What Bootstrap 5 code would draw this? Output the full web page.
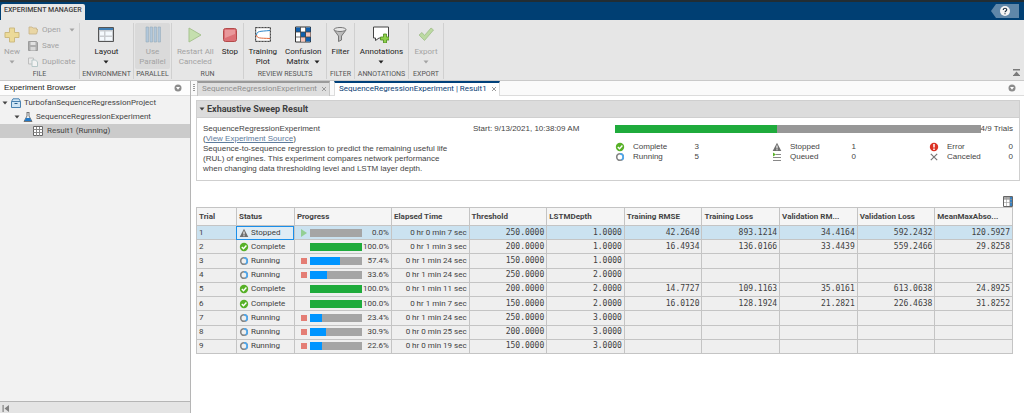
<!DOCTYPE html>
<html lang="en">
<head>
<meta charset="utf-8">
<meta name="viewport" content="width=device-width, initial-scale=1">
<title>Experiment Manager</title>
<link href="https://cdn.jsdelivr.net/npm/bootstrap@5.3.0/dist/css/bootstrap.min.css" rel="stylesheet">
<style>
body{font:8px/10px Roboto,"Liberation Sans",sans-serif;color:#404040;background:#fff}
svg{display:block;flex:none}
button{font:inherit;color:inherit;background:none;border:0;padding:0}
.titlebar{background:#003f73;border-top:2px solid #222d33;height:20px}
.app-tab{background:#e8e8e8;font-size:7px;font-weight:500;line-height:12px;height:16px;padding:0 3px;margin-left:1px;border-radius:2px 2px 0 0;width:84px;white-space:nowrap}
.help{background:#5f87a9;width:28px;height:14px;margin:2px 5px 0 0;clip-path:polygon(0 50%,5px 0,100% 0,100% 100%,5px 100%)}
.ribbon{background:#e6e6e6;border-bottom:1px solid #c9c9c9;height:61px}
.tool-group{border-right:1px solid #d0d0d0;margin-top:3px;height:56px;white-space:nowrap}
.tool-group footer{font-size:7px;color:#555;text-align:center;line-height:10px}
.tools{height:46px}
.tool{display:flex;flex-direction:column;align-items:center;padding-top:3px;height:46px;color:#222}
.tool svg.ico{margin-bottom:4px}
.tool .drop{margin-top:3px}
.tool .two{display:flex;align-items:center;gap:5px}
.tool .two .drop{margin-top:0}
.off{color:#a3a3a3!important}
.off svg{opacity:.5}
.off svg.drop{opacity:1}
.pressed{background:#dadada;border-radius:2px}
.g-file{width:80px}.g-env{width:54px}.g-par{width:38px}.g-run{width:72px}.g-rev{width:83px}.g-fil{width:28px}.g-ann{width:54px}.g-exp{width:35px}
.file-list{padding-top:2px;gap:6px}
.sidebar{width:191px;border-right:1px solid #b5b5b5;background:#f2f2f2}
.side-head{background:#fdfdfd;border-bottom:1px solid #dedede;height:15px;padding:0 8px 0 4px;font-family:"Liberation Sans",sans-serif;color:#222}
.tree li{height:14px;display:flex;align-items:center;gap:3px;color:#444}
.tree .lv1{padding-left:2px}.tree .lv2{padding-left:14px}.tree .lv3{padding-left:33px;gap:4px}
.tree .picked{background:#cbcbcb}
.side-foot{height:12px;background:#e4e4e4;border-top:1px solid #b5b5b5;padding:3px 0 0 2px}
.tabs{background:#fafafa;border-bottom:1px solid #dcdcdc;height:15px;padding:0 8px 0 2px}
.grip{margin-right:2px}
.doc-tab{height:15px;border:1px solid #c4c4c4;border-top:2px solid #9a9a9a;border-bottom:0;background:#dedede;color:#8f8f8f;padding:0 2px 0 4px;white-space:nowrap}
.doc-tab.current{border-color:#dcdcdc;border-top-color:#00407a;background:#fff;color:#0b4075}
.work{padding:4px 4px 0 5px}
.sweep{border:1px solid #cfcfcf}
.sweep summary{background:#dcdcdc;border-bottom:1px solid #cfcfcf;height:17px;display:flex;align-items:center;gap:2px;padding-left:2px;font:bold 9px/10px Roboto,sans-serif}
.sweep-body{display:grid;grid-template-columns:270fr 142fr 398fr;padding:6px;min-height:62px;font-family:"Liberation Sans",sans-serif;color:#444}
.desc{max-width:256px}
.sweep a{color:#5d7b9c}
.progress{border-radius:0;background:#a5a5a5;height:8px}
.progress-bar{background:#0095ff}
.progress-bar.done{background:#1fab3c}
.overall{background:#979797}
.stat{width:84px;gap:8px}
.results{padding:15px 7px 0 0}
.trials{width:100%;table-layout:fixed;height:147px;border-collapse:collapse;border:1px solid #b0b0b0;background:#efefef}
.trials th,.trials td{border:1px solid #c4c4c4;padding:0 2px;white-space:nowrap;overflow:hidden;height:14px}
.trials thead th{background:#f5f5f5;height:18px;font-weight:700;color:#444}
.trials .n{font-family:"DejaVu Sans Mono",monospace;text-align:right}
.trials tr.picked td{background:#cbe2f0}
.trials td.cursor{outline:1px solid #1a8fea;outline-offset:-1px;background:#dfecf5!important}
.state{display:flex;align-items:center;gap:2px}
.bar-cell{display:flex;align-items:center}
.act{width:8px;margin:0 2px 0 3px}
.bar-cell .progress{flex:1}
.pct{width:27px;text-align:right}
</style>
</head>
<body class="d-flex flex-column min-vh-100">
<svg width="0" height="0" class="position-absolute" aria-hidden="true">
<symbol id="caret" viewBox="0 0 6 4"><path d="M.5.5h5L3 3.5z" fill="currentColor"/></symbol>
<symbol id="grid" viewBox="0 0 10 10"><path d="M.5.5h9v9h-9z" fill="#fff" stroke="#666"/><path d="M.5 3.500h9M.5 6.500h9M3.500 1v9M6.500 1v9" stroke="#888" fill="none"/></symbol>
<symbol id="ring" viewBox="0 0 10 10"><circle cx="5" cy="5" r="3.300" fill="none" stroke="#858585" stroke-width="1.600"/><path d="M5 1.700a3.300 3.300 0 0 1 1.500 6.200" fill="none" stroke="#4aa8f2" stroke-width="1.600"/></symbol>
<symbol id="ok" viewBox="0 0 10 10"><circle cx="5" cy="5" r="4.200" fill="#58b128"/><path d="M2.800 5l1.700 1.700L7.400 3.600" fill="none" stroke="#fff" stroke-width="1.400"/></symbol>
<symbol id="warn" viewBox="0 0 10 10"><path d="M5 .8L9.300 9H.7z" fill="#6e6e6e"/><path d="M5 3.500v3M5 7.200v1.100" stroke="#fff" stroke-width="1.100"/></symbol>
<symbol id="menu" viewBox="0 0 8 8"><circle cx="4" cy="4" r="3.500" fill="#8c8c8c"/><path d="M2 3h4L4 5.800z" fill="#fff"/></symbol>
<symbol id="shut" viewBox="0 0 6 6"><path d="M1 1l4 4M5 1L1 5" stroke="#999" fill="none"/></symbol>
</svg>

<header>
<div class="titlebar d-flex justify-content-between">
<div class="app-tab align-self-end">EXPERIMENT MANAGER</div>
<button class="help d-flex align-items-center justify-content-center" aria-label="Help"><svg width="10" height="10" viewBox="0 0 10 10"><circle cx="5" cy="5" r="5" fill="#f4f4f4"/><path d="M3.300 3.900C3.300 1.600 6.800 1.800 6.700 3.800 6.700 4.900 5 5 5 6.300M5 7.200v1.100" fill="none" stroke="#1c3144" stroke-width="1.200"/></svg></button>
</div>
<div class="ribbon d-flex">
<section class="tool-group g-file">
<div class="tools d-flex">
<button class="tool off ps-1" disabled><svg class="ico" width="16" height="17" viewBox="0 0 16 17"><path d="M5.500 2h5v4.500H15v5h-4.500V16h-5v-4.500H1v-5h4.500z" fill="#f3d04c" stroke="#b58f1c"/></svg>New<svg class="drop" width="6" height="4"><use href="#caret"/></svg></button>
<div class="file-list d-flex flex-column ps-2">
<button class="off d-flex gap-1 align-items-center" disabled><svg width="10" height="10" viewBox="0 0 10 10"><path d="M1 2h3l1 1h3.500v1.500H10L8.500 9H1z" fill="#edc766" stroke="#a9812d" stroke-width=".8"/></svg>Open<svg class="drop ms-1" width="6" height="4"><use href="#caret"/></svg></button>
<button class="off d-flex gap-1 align-items-center" disabled><svg width="10" height="10" viewBox="0 0 10 10"><path d="M.5.5h8l1 1v8h-9z" fill="#777" stroke="#555"/><path d="M2.500 1h5v3h-5z" fill="#ddd"/><path d="M2.500 6h5v3.500h-5z" fill="#ccc"/></svg>Save</button>
<button class="off d-flex gap-1 align-items-center" disabled><svg width="10" height="10" viewBox="0 0 10 10"><path d="M.5 1h5v6h-5z" fill="#eee" stroke="#999"/><path d="M4 3h3.500l2 2v4.500H4z" fill="#fff" stroke="#8aa"/></svg>Duplicate</button>
</div></div><footer>FILE</footer></section>
<section class="tool-group g-env"><div class="tools d-flex justify-content-center">
<button class="tool"><svg class="ico" width="16" height="17" viewBox="0 0 16 17"><path d="M.5 1.500h15v14H.5z" fill="#c9ccd0" stroke="#555"/><path d="M1 2h14v2H1z" fill="#3f7fb5"/><path d="M2 5.500h4v4H2zM2 11h4v3.500H2zM7.500 5.500H14v4H7.500zM7.500 11H14v3.500H7.500z" fill="#f4f9fd"/></svg>Layout<svg class="drop" width="6" height="4"><use href="#caret"/></svg></button>
</div><footer>ENVIRONMENT</footer></section>
<section class="tool-group g-par"><div class="tools d-flex justify-content-center">
<button class="tool off pressed px-1" disabled><svg class="ico" width="16" height="17" viewBox="0 0 16 17"><path d="M1 1h2.500v15H1zM5 1h2.500v15H5zM9 1h2.500v15H9zM13 1h2.500v15H13z" fill="#8ab6dc" stroke="#56809f" stroke-width=".6"/></svg>Use<span>Parallel</span></button>
</div><footer>PARALLEL</footer></section>
<section class="tool-group g-run"><div class="tools d-flex justify-content-center gap-2">
<button class="tool off" disabled><svg class="ico" width="16" height="17" viewBox="0 0 16 17"><path d="M2 2l12 7-12 7z" fill="#a5d977" stroke="#6aa13c"/></svg>Restart All<span>Canceled</span></button>
<button class="tool"><svg class="ico" width="16" height="17" viewBox="0 0 16 17"><rect x="1.500" y="2.500" width="13" height="13" rx="2" fill="#dc7076" stroke="#b34a4a"/><path d="M3 4h10v4L3 12z" fill="#e9989b"/></svg>Stop</button>
</div><footer>RUN</footer></section>
<section class="tool-group g-rev"><div class="tools d-flex justify-content-center gap-2">
<button class="tool"><svg class="ico" width="16" height="17" viewBox="0 0 16 17"><path d="M.5 1.500h15v14H.5z" fill="#fff" stroke="#444" stroke-dasharray="2 1"/><path d="M.8 1.800h14.400v13.400H.8z" fill="none" stroke="#555" stroke-width=".6"/><path d="M1.500 9C2 5 4 5.500 15 4.500" fill="none" stroke="#2e86c8"/><path d="M1.500 9c.5 3.500 3 3 13.500 3.500" fill="none" stroke="#e0673a"/></svg>Training<span>Plot</span></button>
<button class="tool"><svg class="ico" width="16" height="17" viewBox="0 0 16 17"><path d="M.5 1h15v15H.5z" fill="#fff" stroke="#333"/><path d="M1 1.500h4.500V6H1zM6 6h5v5H6zM11 11h4.500v4.500H11zM11 1.500h4.500V6H11z" fill="#0f5fae"/><path d="M11 6h4.500v5H11zM6 11h5v4.500H6z" fill="#f6c3b8"/><path d="M5.500 1v15M10.500 1v15M.5 6h15M.5 11h15" stroke="#444" stroke-width=".8"/></svg>Confusion<span class="two">Matrix<svg class="drop" width="6" height="4"><use href="#caret"/></svg></span></button>
</div><footer>REVIEW RESULTS</footer></section>
<section class="tool-group g-fil"><div class="tools d-flex justify-content-center">
<button class="tool"><svg class="ico" width="16" height="17" viewBox="0 0 16 17"><path d="M2 4l4.500 6v5.500L9.500 14v-4L14 4z" fill="#bbb" stroke="#777"/><ellipse cx="8" cy="3.500" rx="6" ry="2" fill="#e8e8e8" stroke="#777"/></svg>Filter</button>
</div><footer>FILTER</footer></section>
<section class="tool-group g-ann"><div class="tools d-flex justify-content-center">
<button class="tool"><svg class="ico" width="16" height="17" viewBox="0 0 16 17"><path d="M.5 1h15v11H6L2.500 14.500V12h-2z" fill="#fff" stroke="#444"/><path d="M10.500 8h3v3h2.500v3h-2.500v3h-3v-3h-3v-3h3z" fill="#8ed04b" stroke="#4b8b1d" stroke-width=".8"/></svg>Annotations<svg class="drop" width="6" height="4"><use href="#caret"/></svg></button>
</div><footer>ANNOTATIONS</footer></section>
<section class="tool-group g-exp"><div class="tools d-flex justify-content-center">
<button class="tool off" disabled><svg class="ico" width="16" height="17" viewBox="0 0 16 17"><path d="M1 9l3-2.500L6.500 9.500 13 2l2.500 2-9 10.500z" fill="#93cf60" stroke="#5d9632" stroke-width=".8"/></svg>Export<svg class="drop" width="6" height="4"><use href="#caret"/></svg></button>
</div><footer>EXPORT</footer></section>
<button class="ms-auto align-self-end p-1" aria-label="Collapse toolstrip"><svg width="7" height="7" viewBox="0 0 7 7"><path d="M0 0h7v1.500H0zM3.500 2.500L6.500 6h-6zM0 6h7v1H0z" fill="#7a7a7a"/></svg></button>
</div>
</header>

<div class="d-flex flex-grow-1">
<aside class="sidebar d-flex flex-column flex-shrink-0">
<div class="side-head d-flex align-items-center justify-content-between">Experiment Browser<button aria-label="Browser menu"><svg width="8" height="8"><use href="#menu"/></svg></button></div>
<ul class="tree list-unstyled m-0 flex-grow-1">
<li class="lv1"><svg width="6" height="4"><use href="#caret"/></svg><svg width="10" height="10" viewBox="0 0 10 10"><path d="M.5 3.500h9v6h-9zM.5 3.500L2 .8h6l1.500 2.700" fill="#cfe5f5" stroke="#4a82b0"/><path d="M3.500 5.500h3" stroke="#27608f"/></svg>TurbofanSequenceRegressionProject</li>
<li class="lv2"><svg width="6" height="4"><use href="#caret"/></svg><svg width="10" height="10" viewBox="0 0 10 10"><path d="M3.500.5h3M4 1v3L1 9.500h8L6 4V1" fill="#eef4f8" stroke="#666" stroke-width=".9"/><path d="M3 6h4l1.500 3h-7z" fill="#1f78c8"/></svg>SequenceRegressionExperiment</li>
<li class="lv3 picked"><svg width="10" height="10"><use href="#grid"/></svg>Result1 (Running)</li>
</ul>
<div class="side-foot"><button class="d-block" aria-label="Collapse browser"><svg width="8" height="7" viewBox="0 0 8 7"><path d="M.5 0h1.200v7H.5zM7 0v7L2.500 3.500z" fill="#808080"/></svg></button></div>
</aside>

<main class="flex-grow-1">
<div class="tabs d-flex align-items-center">
<svg class="grip" width="2" height="8" viewBox="0 0 2 8"><path d="M1 0v8" stroke="#999" stroke-width="2" stroke-dasharray="1 1"/></svg>
<button class="doc-tab d-flex align-items-center gap-1">SequenceRegressionExperiment<svg width="6" height="6"><use href="#shut"/></svg></button>
<button class="doc-tab current d-flex align-items-center gap-1 ms-1">SequenceRegressionExperiment | Result1<svg width="6" height="6"><use href="#shut"/></svg></button>
<button class="ms-auto" aria-label="Document menu"><svg width="8" height="8"><use href="#menu"/></svg></button>
</div>
<div class="work">
<details class="sweep" open>
<summary><svg width="6" height="4"><use href="#caret"/></svg>Exhaustive Sweep Result</summary>
<div class="sweep-body">
<div class="desc">SequenceRegressionExperiment<br>(<a href="#">View Experiment Source</a>)<br>Sequence-to-sequence regression to predict the remaining useful life (RUL) of engines. This experiment compares network performance when changing data thresholding level and LSTM layer depth.</div>
<div>Start: 9/13/2021, 10:38:09 AM</div>
<div>
<div class="d-flex align-items-center"><div class="progress overall flex-grow-1" role="progressbar" aria-label="Trials finished" aria-valuenow="4" aria-valuemin="0" aria-valuemax="9"><div class="progress-bar done" style="width:44.4%"></div></div>4/9 Trials</div>
<div class="d-flex justify-content-between mt-2">
<div>
<div class="stat d-flex align-items-center"><svg width="10" height="10"><use href="#ok"/></svg>Complete<span class="ms-auto">3</span></div>
<div class="stat d-flex align-items-center"><svg width="10" height="10"><use href="#ring"/></svg>Running<span class="ms-auto">5</span></div>
</div><div>
<div class="stat d-flex align-items-center"><svg width="10" height="10"><use href="#warn"/></svg>Stopped<span class="ms-auto">1</span></div>
<div class="stat d-flex align-items-center"><svg width="10" height="10" viewBox="0 0 10 10"><path d="M4 2.500h5M1 5.500h8M1 8.500h8" stroke="#888"/><path d="M1 .5l3 2L1 4.500z" fill="#58b128"/></svg>Queued<span class="ms-auto">0</span></div>
</div><div>
<div class="stat d-flex align-items-center"><svg width="10" height="10" viewBox="0 0 10 10"><circle cx="5" cy="5" r="4.200" fill="#dc3325"/><path d="M5 2v3.500M5 6.600v1.300" stroke="#fff" stroke-width="1.500"/></svg>Error<span class="ms-auto">0</span></div>
<div class="stat d-flex align-items-center"><svg width="10" height="10" viewBox="0 0 10 10"><path d="M1.800 1.800l6.400 6.400M8.200 1.800L1.800 8.200" stroke="#777" stroke-width="1.200"/></svg>Canceled<span class="ms-auto">0</span></div>
</div></div></div></div>
</details>
<div class="results">
<button class="d-block ms-auto" aria-label="Show or hide columns"><svg width="10" height="11" viewBox="0 0 10 11"><path d="M.5.5h9v10h-9z" fill="#fff" stroke="#666"/><path d="M7 1h2v9H7z" fill="#3b82c0"/><path d="M1 1h6v2H1z" fill="#aaa"/><path d="M1 3.500h8M1 6.500h8M3.500 1v9M6.500 1v9" stroke="#999" stroke-width=".6"/></svg></button>
<table class="trials">
<colgroup><col style="width:4.900%"><col style="width:7.100%"><col style="width:11.900%"><col span="8"></colgroup>
<thead><tr><th>Trial</th><th>Status</th><th>Progress</th><th>Elapsed Time</th><th>Threshold</th><th>LSTMDepth</th><th>Training RMSE</th><th>Training Loss</th><th>Validation RM...</th><th>Validation Loss</th><th>MeanMaxAbso...</th></tr></thead>
<tbody id="rows"></tbody>
</table>
</div>
</div>
</main>
</div>
<script>
const trials = [
  ['Stopped', 0, '0 hr 0 min 7 sec', '250.0000', '1.0000', '42.2640', '893.1214', '34.4164', '592.2432', '120.5927'],
  ['Complete', 100, '0 hr 1 min 3 sec', '200.0000', '1.0000', '16.4934', '136.0166', '33.4439', '559.2466', '29.8258'],
  ['Running', 57.4, '0 hr 1 min 24 sec', '150.0000', '1.0000'],
  ['Running', 33.6, '0 hr 1 min 24 sec', '250.0000', '2.0000'],
  ['Complete', 100, '0 hr 1 min 11 sec', '200.0000', '2.0000', '14.7727', '109.1163', '35.0161', '613.0638', '24.8925'],
  ['Complete', 100, '0 hr 1 min 7 sec', '150.0000', '2.0000', '16.0120', '128.1924', '21.2821', '226.4638', '31.8252'],
  ['Running', 23.4, '0 hr 1 min 24 sec', '250.0000', '3.0000'],
  ['Running', 30.9, '0 hr 0 min 25 sec', '200.0000', '3.0000'],
  ['Running', 22.6, '0 hr 0 min 19 sec', '150.0000', '3.0000']
];
const icon = { Stopped: 'warn', Complete: 'ok', Running: 'ring' };
const action = {
  Stopped: '<svg width="8" height="8" viewBox="0 0 8 8"><path d="M1 0l6 4-6 4z" fill="#93cf93"/></svg>',
  Complete: '',
  Running: '<svg width="8" height="8" viewBox="0 0 8 8"><path d="M1 1h6v6H1z" fill="#e47d74"/></svg>'
};
document.getElementById('rows').innerHTML = trials.map(([state, pct, time, ...nums], i) => `
<tr class="${i ? '' : 'picked'}"><td>${i + 1}</td>
<td class="${i ? '' : 'cursor'}"><div class="state"><svg width="10" height="10"><use href="#${icon[state]}"/></svg>${state}</div></td>
<td><div class="bar-cell"><span class="act">${action[state]}</span><div class="progress" role="progressbar" aria-label="Trial ${i + 1}" aria-valuenow="${pct}" aria-valuemin="0" aria-valuemax="100"><div class="progress-bar ${pct === 100 ? 'done' : ''}" style="width:${pct}%"></div></div><span class="pct">${pct.toFixed(1)}%</span></div></td>
<td class="text-end">${time}</td>${[0, 1, 2, 3, 4, 5, 6].map(k => `<td class="n">${nums[k] || ''}</td>`).join('')}</tr>`).join('');
</script>
<script src="https://cdn.jsdelivr.net/npm/bootstrap@5.3.0/dist/js/bootstrap.bundle.min.js"></script>
</body>
</html>
